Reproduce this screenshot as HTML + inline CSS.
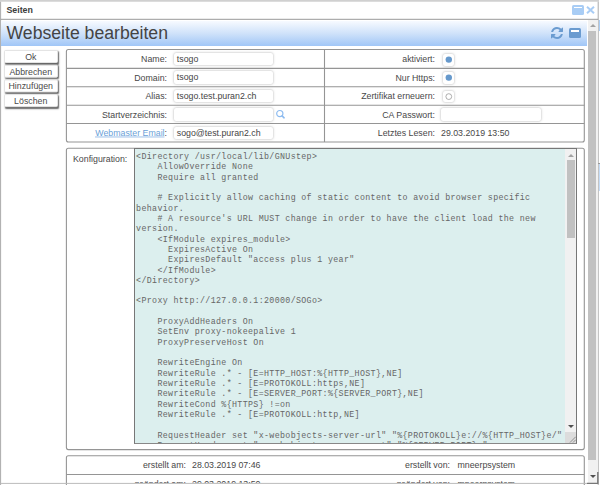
<!DOCTYPE html>
<html><head><meta charset="utf-8">
<style>
*{box-sizing:border-box}
html,body{margin:0;padding:0;width:600px;height:485px;overflow:hidden;background:#fff;font-family:"Liberation Sans",sans-serif;color:#444}
.a{position:absolute}
#title{position:absolute;left:6.4px;top:5.4px;font-size:8.85px;font-weight:bold;color:#3c3c3c}
#hdr{position:absolute;left:1px;top:20.5px;width:586px;height:25.5px;background:linear-gradient(#f7faff,#cfe2fa 50%,#a0c6f7)}
#hdr .t{position:absolute;left:5.5px;top:2px;font-size:17.65px;color:#444}
.btn{position:absolute;left:4px;width:53.5px;height:12.5px;background:#fff;border:1px solid #e4e4e4;border-radius:1.5px;box-shadow:1px 1.2px 1.5px #666;font-size:8.8px;text-align:center;line-height:13.4px;color:#4a4a4a}
.lbl{position:absolute;font-size:8.8px;color:#484848;text-align:right;white-space:nowrap}
.inp{position:absolute;height:12.5px;background:#fff;border-radius:2px;box-shadow:0 0 2.5px rgba(0,0,0,.34);font-size:8.8px;padding-left:3px;line-height:12.5px;color:#444}
.cb{position:absolute;width:11.5px;height:11.5px;background:#fff;border-radius:2px;box-shadow:0 0 2.5px rgba(0,0,0,.34)}
.cb i{position:absolute;left:2.5px;top:2.5px;width:6.5px;height:6.5px;border-radius:50%;background:#6699cc}
.cb i.e{background:#fff;border:0.8px solid #aaa;left:2.9px;top:2.9px;width:5.8px;height:5.8px}
#ta{position:absolute;left:134px;top:148px;width:443px;height:295.5px;background:#dcefee;border:1px solid #777;border-bottom-color:#888;overflow:hidden}
#ta pre{margin:0;position:absolute;left:1.1px;top:3.1px;font-family:"Liberation Mono",monospace;font-size:8.3px;letter-spacing:0.35px;line-height:10.32px;color:#666;white-space:pre}
.tri{position:absolute;width:0;height:0;border-left:3px solid transparent;border-right:3px solid transparent}
</style></head><body>

<!-- lines / frames -->
<svg class="a" style="left:0;top:0" width="600" height="485" viewBox="0 0 600 485">
 <g fill="none" stroke="#a0a0a0" stroke-width="1">
  <path d="M0.6 485V1.4M598.2 1.4V485" stroke="#aaa"/><path d="M0 0.9H599" stroke="#d0d0d0" stroke-width="1.8"/>
  <path d="M0.6 19.3H598.2" stroke="#999"/>
 </g>
 <g fill="none" stroke="#959595" stroke-width="1.1">
  <rect x="66.4" y="49.5" width="517.9" height="92.5" rx="2"/>
  <path d="M66.4 68.4H584.3M66.4 86.8H584.3M66.4 105.2H584.3M66.4 123.5H584.3M324.5 49.5V142"/>
  <rect x="66.4" y="148.3" width="517.9" height="301.3" rx="2"/>
  <rect x="66.4" y="455.8" width="517.9" height="60" rx="2"/>
  <path d="M66.4 474.5H584.3"/>
 </g>
</svg>

<div id="title">Seiten</div>
<div id="hdr"><div class="t">Webseite bearbeiten</div></div>
<svg class="a" style="left:551px;top:27px" width="12" height="12" viewBox="0 0 1536 1536"><path fill="#6a9bd0" d="M1511 928q0 5-1 7-64 268-268 434.5t-478 166.5q-146 0-282.5-55t-243.5-157l-129 129q-19 19-45 19t-45-19-19-45v-448q0-26 19-45t45-19h448q26 0 45 19t19 45-19 45l-137 137q71 66 161 102t187 36q134 0 250-65t186-179q11-17 53-117 8-23 30-23h192q13 0 22.5 9.5t9.5 22.5zm25-800v448q0 26-19 45t-45 19h-448q-26 0-45-19t-19-45 19-45l138-138q-148-137-349-137-134 0-250 65t-186 179q-11 17-53 117-8 23-30 23h-199q-13 0-22.5-9.5t-9.5-22.5v-7q65-268 270-434.5t480-166.5q146 0 284 55.5t245 156.5l130-129q19-19 45-19t45 19 19 45z"/></svg>
<div class="a" style="left:569px;top:28px;width:12px;height:10px;background:#6a9bd0;border-radius:1.5px"><div class="a" style="left:1.7px;top:1.9px;width:8.6px;height:1.8px;background:#fff"></div></div>
<div class="a" style="left:572px;top:5px;width:12px;height:10px;background:#a9cdf5;border-radius:1.5px"><div class="a" style="left:1.7px;top:1.7px;width:8.6px;height:1.8px;background:#fff"></div></div>
<svg class="a" style="left:586px;top:6px" width="9" height="8" viewBox="0 0 9 8"><path d="M1 0.8L8 7.2M8 0.8L1 7.2" stroke="#a9cdf5" stroke-width="2"/></svg>

<div class="btn" style="top:50px">Ok</div>
<div class="btn" style="top:64px;transform:translateY(0.7px)">Abbrechen</div>
<div class="btn" style="top:79px;transform:translateY(0.4px)">Hinzufügen</div>
<div class="btn" style="top:94px;transform:translateY(0.1px)">Löschen</div>

<div class="lbl" style="right:433px;top:54px">Name:</div>
<div class="lbl" style="right:433px;top:72.5px">Domain:</div>
<div class="lbl" style="right:433px;top:91px">Alias:</div>
<div class="lbl" style="right:433px;top:109.5px">Startverzeichnis:</div>
<div class="lbl" style="right:433px;top:128px"><span style="color:#6a9fd8">Webmaster Email</span>:</div>

<div class="inp" style="left:173.8px;top:52.8px;width:99.5px">tsogo</div>
<div class="inp" style="left:173.8px;top:71.3px;width:99.5px">tsogo</div>
<div class="inp" style="left:173.8px;top:89.8px;width:99.5px">tsogo.test.puran2.ch</div>
<div class="inp" style="left:173.8px;top:108.1px;width:99.5px"></div>
<div class="inp" style="left:173.8px;top:126.5px;width:99.5px">sogo@test.puran2.ch</div>
<svg class="a" style="left:275px;top:108.5px" width="11" height="11" viewBox="0 0 11 11"><circle cx="4.8" cy="4.6" r="3.1" fill="none" stroke="#8dbbf0" stroke-width="1.2"/><path d="M7.1 6.9L9.1 8.8" stroke="#8dbbf0" stroke-width="1.6" stroke-linecap="round"/></svg>

<div class="lbl" style="right:165px;top:54px">aktiviert:</div>
<div class="lbl" style="right:165px;top:72.5px">Nur Https:</div>
<div class="lbl" style="right:165px;top:91px">Zertifikat erneuern:</div>
<div class="lbl" style="right:165px;top:109.5px">CA Passwort:</div>
<div class="lbl" style="right:165px;top:128px">Letztes Lesen:</div>

<div class="cb" style="left:442.8px;top:54px"></div><svg class="a" style="left:442.8px;top:54px" width="12" height="12"><circle cx="5.8" cy="5.6" r="3.2" fill="#6699cc"/></svg>
<div class="cb" style="left:442.8px;top:72.4px"></div><svg class="a" style="left:442.8px;top:72.4px" width="12" height="12"><circle cx="5.8" cy="5.6" r="3.2" fill="#6699cc"/></svg>
<div class="cb" style="left:442.8px;top:90.8px"></div><svg class="a" style="left:442.8px;top:90.8px" width="12" height="12"><circle cx="5.8" cy="5.6" r="2.9" fill="#fff" stroke="#999" stroke-width="0.8"/></svg>
<div class="inp" style="left:440.5px;top:108.1px;width:100.5px"></div>
<div class="lbl" style="left:441px;top:128px;text-align:left">29.03.2019 13:50</div>

<svg class="a" style="left:0;top:130px" width="200" height="10"><rect x="95" y="6.3" width="69.5" height="1.3" fill="#b5d0ee"/></svg>
<div class="lbl" style="left:73px;top:154px;text-align:left">Konfiguration:</div>
<div id="ta"><pre>&lt;Directory /usr/local/lib/GNUstep&gt;
    AllowOverride None
    Require all granted

    # Explicitly allow caching of static content to avoid browser specific
behavior.
    # A resource's URL MUST change in order to have the client load the new
version.
    &lt;IfModule expires_module&gt;
      ExpiresActive On
      ExpiresDefault "access plus 1 year"
    &lt;/IfModule&gt;
&lt;/Directory&gt;

&lt;Proxy http://127.0.0.1:20000/SOGo&gt;

    ProxyAddHeaders On
    SetEnv proxy-nokeepalive 1
    ProxyPreserveHost On

    RewriteEngine On
    RewriteRule .* - [E=HTTP_HOST:%{HTTP_HOST},NE]
    RewriteRule .* - [E=PROTOKOLL:https,NE]
    RewriteRule .* - [E=SERVER_PORT:%{SERVER_PORT},NE]
    RewriteCond %{HTTPS} !=on
    RewriteRule .* - [E=PROTOKOLL:http,NE]

    RequestHeader set "x-webobjects-server-url" "%{PROTOKOLL}e://%{HTTP_HOST}e/"
    RequestHeader set "x-webobjects-server-port" "%{SERVER_PORT}e"
</pre>
<div class="a" style="left:430px;top:0;width:11.5px;height:294px;background:#f1f1f1"></div>
<div class="a" style="left:431.8px;top:11px;width:8px;height:78px;background:#c1c1c1"></div>
<div class="tri" style="left:432.7px;top:4.9px;border-bottom:3px solid #a3a3a3"></div>
<div class="tri" style="left:432.7px;top:275.6px;border-top:3px solid #505050"></div>
<div class="a" style="left:430px;top:283px;width:11.5px;height:11px;background:#dcdcdc"></div>
<svg class="a" style="left:430px;top:283px" width="11.5" height="11" viewBox="0 0 11.5 11"><path d="M5 10.5L10.8 4.7M8 10.5L10.8 7.7" stroke="#888" stroke-width="0.9"/></svg>
</div>

<div class="lbl" style="right:414px;top:460px">erstellt am:</div>
<div class="lbl" style="left:192px;top:460px;text-align:left">28.03.2019 07:46</div>
<div class="lbl" style="right:150px;top:460px">erstellt von:</div>
<div class="lbl" style="left:457.5px;top:460px;text-align:left">mneerpsystem</div>
<div class="a" style="left:0;top:475px;width:600px;height:8px;overflow:hidden">
<div class="lbl" style="right:414px;top:3.6px">geändert am:</div>
<div class="lbl" style="left:192px;top:3.6px;text-align:left">29.03.2019 13:50</div>
<div class="lbl" style="right:150px;top:3.6px">geändert von:</div>
<div class="lbl" style="left:457.5px;top:3.6px;text-align:left">mneerpsystem</div>
</div>

<!-- outer scrollbar -->
<div class="a" style="left:587.5px;top:20px;width:10px;height:463px;background:#f1f1f1"></div>
<div class="a" style="left:588.3px;top:31px;width:7.6px;height:429px;background:#c1c1c1"></div>
<div class="tri" style="left:589.5px;top:24.3px;border-bottom:3px solid #a3a3a3"></div>
<div class="tri" style="left:589.5px;top:475.3px;border-top:3px solid #505050"></div>
<svg class="a" style="left:0;top:0" width="600" height="485"><path d="M597.8 472V483.4H587" fill="none" stroke="#777" stroke-width="1.4"/><path d="M0.6 483.4H587" stroke="#bbb" stroke-width="1"/></svg>
<div class="a" style="left:598.6px;top:20px;width:1.4px;height:10.5px;background:#a9cdf5"></div>
<div class="a" style="left:598.6px;top:163px;width:1.4px;height:27.5px;background:linear-gradient(90deg,#e0edfc,#a9cdf5)"></div><div class="a" style="left:598.4px;top:162.6px;width:1.6px;height:1px;background:#999"></div>
</body></html>
